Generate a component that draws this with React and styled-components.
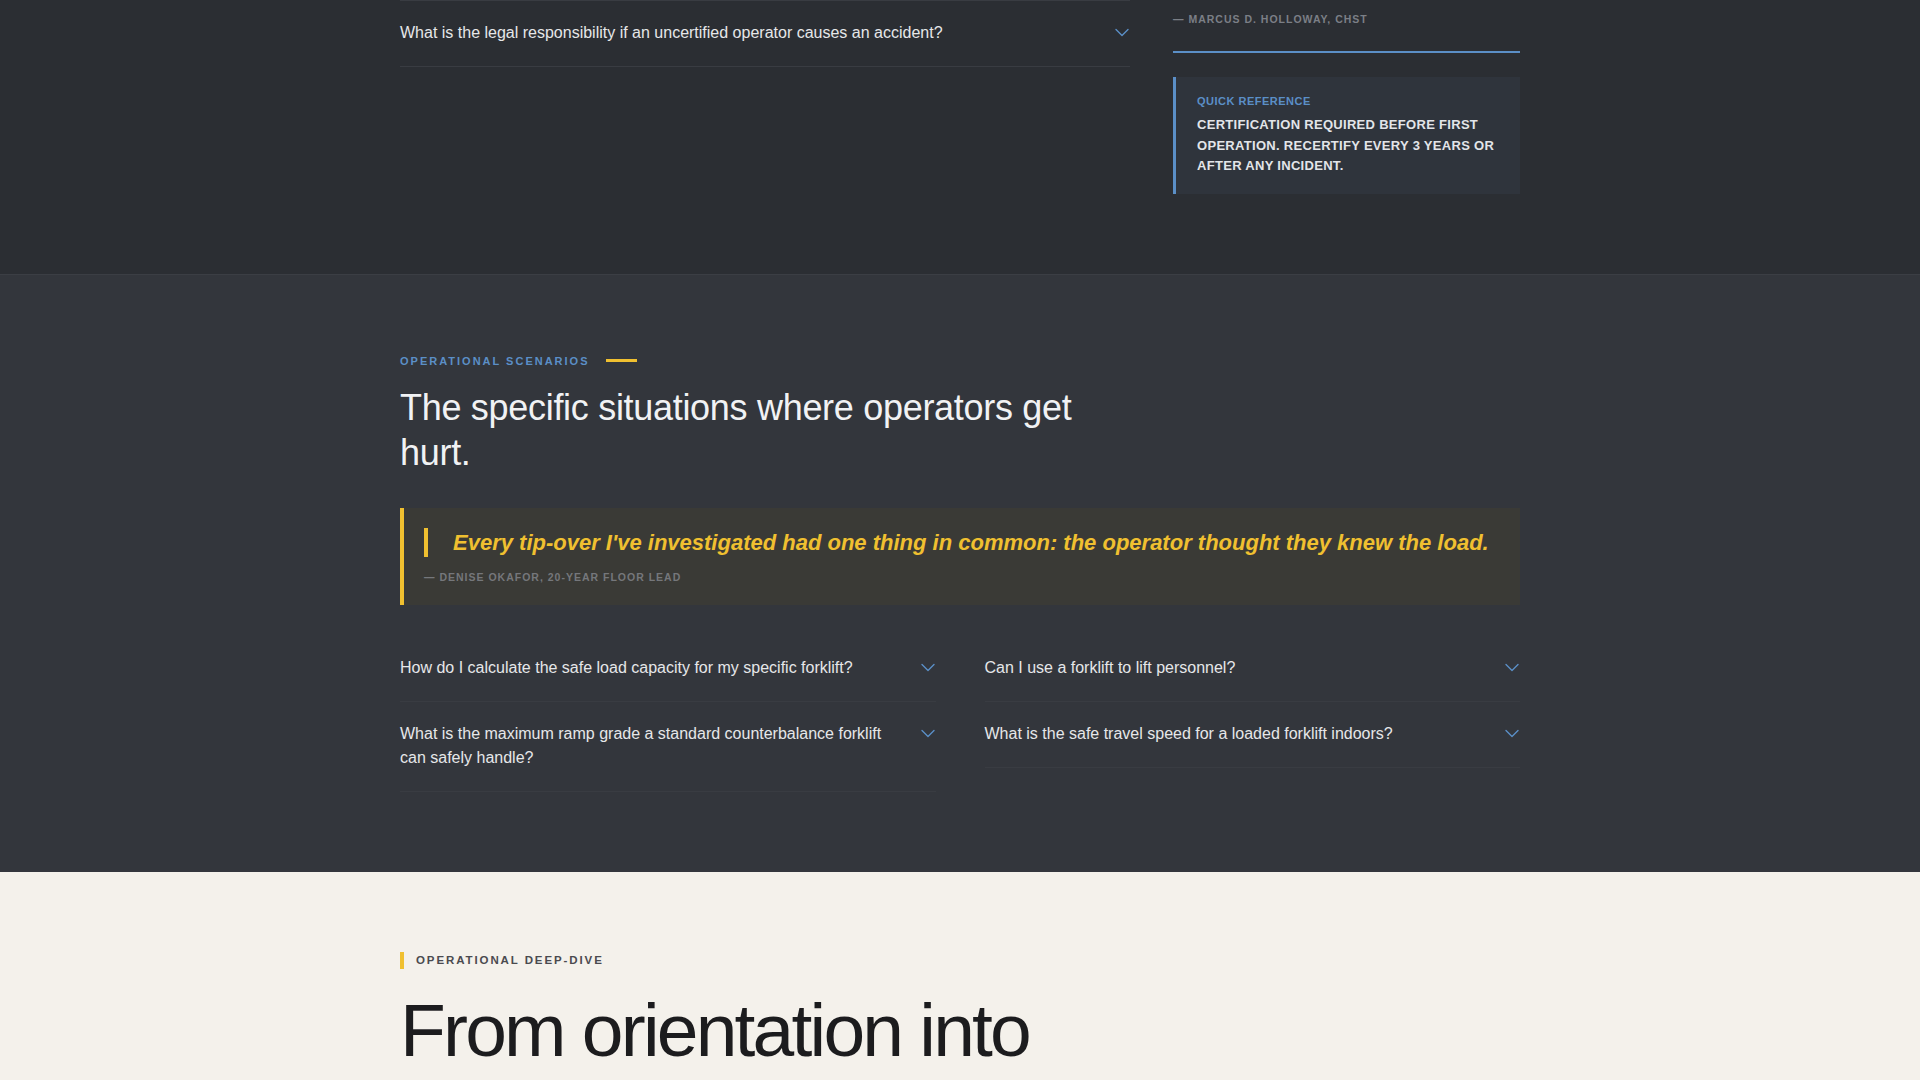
import React from 'react';
import styled, { createGlobalStyle } from 'styled-components';

const GlobalStyle = createGlobalStyle`
  * {
    box-sizing: border-box;
  }
  body {
    margin: 0;
    background: #2b2e33;
    font-family: 'Liberation Sans', Arial, Helvetica, sans-serif;
    -webkit-font-smoothing: antialiased;
  }
`;

const Section = styled.section`
  background: ${(props) => props.$bg};
  border-top: ${(props) => (props.$divided ? '1px solid #3b3e44' : 'none')};
  padding: ${(props) => props.$pad || '80px 0'};
`;

const Container = styled.div`
  width: 1120px;
  margin: 0 auto;
`;

const SplitGrid = styled.div`
  display: grid;
  grid-template-columns: 1fr 347px;
  column-gap: 43px;
  align-items: start;
`;

const FaqList = styled.div`
  display: flex;
  flex-direction: column;
`;

const FaqGrid = styled.div`
  display: grid;
  grid-template-columns: 1fr 1fr;
  column-gap: 49px;
  align-items: start;
  margin-top: 31px;
`;

const FaqColumn = styled.div`
  display: flex;
  flex-direction: column;
`;

const FaqItem = styled.div`
  display: flex;
  align-items: flex-start;
  justify-content: space-between;
  gap: 24px;
  padding: 20px 0 21px;
  border-top: ${(props) => (props.$first ? '1px solid #393c42' : 'none')};
  border-bottom: 1px solid #393c42;
  cursor: pointer;
`;

const FaqQuestion = styled.span`
  font-size: 16px;
  line-height: 24px;
  color: #e6e7e9;
`;

const Chevron = styled.svg`
  flex-shrink: 0;
  width: 16px;
  height: 16px;
  margin-top: 3px;
  color: #5b8fc7;
`;

const Attribution = styled.div`
  font-size: 10.5px;
  font-weight: 700;
  letter-spacing: 1px;
  text-transform: uppercase;
  color: ${(props) => props.$color || '#7b7f86'};
  line-height: 16px;
`;

const Testimonial = styled.div`
  padding: 11px 0 24px;
  border-bottom: 2px solid #5b8fc7;
`;

const QuickRef = styled.aside`
  margin-top: 24px;
  background: #2f343c;
  border-left: 3px solid #5b8fc7;
  padding: 18px 20px 17px 21px;
`;

const QuickRefLabel = styled.div`
  font-size: 11px;
  font-weight: 700;
  letter-spacing: 0.5px;
  color: #5b8fc7;
  text-transform: uppercase;
  margin-bottom: 8px;
`;

const QuickRefBody = styled.p`
  margin: 0;
  font-size: 13px;
  line-height: 20.5px;
  font-weight: 700;
  letter-spacing: 0.3px;
  color: #e3e5e9;
  text-transform: uppercase;
`;

const EyebrowRow = styled.div`
  display: flex;
  align-items: center;
  gap: 16px;
`;

const Eyebrow = styled.span`
  font-size: 11px;
  font-weight: 700;
  letter-spacing: 2px;
  text-transform: uppercase;
  color: #5b8fc7;
`;

const Dash = styled.span`
  display: block;
  width: 31px;
  height: 3px;
  background: #f0c030;
`;

const SectionTitle = styled.h2`
  margin: 18px 0 0;
  max-width: 720px;
  font-size: 36px;
  line-height: 45px;
  font-weight: 400;
  color: #f1f2f4;
  letter-spacing: -0.3px;
`;

const PullQuote = styled.blockquote`
  margin: 33px 0 0;
  background: #3a3a36;
  border-left: 4px solid #f0c030;
  padding: 20px 24px 20px 20px;
`;

const QuoteText = styled.p`
  margin: 0 0 12px;
  border-left: 4px solid #f0c030;
  padding-left: 25px;
  font-size: 22px;
  line-height: 29px;
  font-weight: 700;
  font-style: italic;
  color: #f0c030;
`;

const Kicker = styled.div`
  display: flex;
  align-items: center;
  gap: 12px;
  font-size: 11.5px;
  font-weight: 700;
  letter-spacing: 1.9px;
  text-transform: uppercase;
  color: #4a4a4f;

  &::before {
    content: '';
    display: block;
    width: 4px;
    height: 17px;
    background: #f0c030;
  }
`;

const DisplayTitle = styled.h2`
  margin: 20px 0 0;
  font-size: 75px;
  line-height: 1.1;
  font-weight: 400;
  letter-spacing: -2.8px;
  color: #1c1c1e;
`;

const ChevronDown = () => (
  <Chevron viewBox="0 0 16 16" fill="none">
    <path
      d="M2 5.5L8 11.5L14 5.5"
      stroke="currentColor"
      strokeWidth="1.4"
      strokeLinecap="round"
      strokeLinejoin="round"
    />
  </Chevron>
);

const Faq = ({ question, first }) => (
  <FaqItem $first={first}>
    <FaqQuestion>{question}</FaqQuestion>
    <ChevronDown />
  </FaqItem>
);

const scenarioColumns = [
  [
    'How do I calculate the safe load capacity for my specific forklift?',
    'What is the maximum ramp grade a standard counterbalance forklift can safely handle?',
  ],
  [
    'Can I use a forklift to lift personnel?',
    'What is the safe travel speed for a loaded forklift indoors?',
  ],
];

const App = () => {
  return (
    <>
      <GlobalStyle />
      <Section $bg="#2b2e33" $pad="0 0 80px">
        <Container>
          <SplitGrid>
            <FaqList>
              <Faq
                first
                question="What is the legal responsibility if an uncertified operator causes an accident?"
              />
            </FaqList>
            <div>
              <Testimonial>
                <Attribution>— Marcus D. Holloway, CHST</Attribution>
              </Testimonial>
              <QuickRef>
                <QuickRefLabel>Quick Reference</QuickRefLabel>
                <QuickRefBody>
                  Certification required before first operation. Recertify every 3
                  years or after any incident.
                </QuickRefBody>
              </QuickRef>
            </div>
          </SplitGrid>
        </Container>
      </Section>

      <Section $bg="#33363c" $divided>
        <Container>
          <EyebrowRow>
            <Eyebrow>Operational Scenarios</Eyebrow>
            <Dash />
          </EyebrowRow>
          <SectionTitle>The specific situations where operators get hurt.</SectionTitle>
          <PullQuote>
            <QuoteText>
              Every tip-over I've investigated had one thing in common: the operator
              thought they knew the load.
            </QuoteText>
            <Attribution $color="#75777b">— Denise Okafor, 20-Year Floor Lead</Attribution>
          </PullQuote>
          <FaqGrid>
            {scenarioColumns.map((column, i) => (
              <FaqColumn key={i}>
                {column.map((q) => (
                  <Faq key={q} question={q} />
                ))}
              </FaqColumn>
            ))}
          </FaqGrid>
        </Container>
      </Section>

      <Section $bg="#f4f1eb">
        <Container>
          <Kicker>Operational Deep-Dive</Kicker>
          <DisplayTitle>From orientation into</DisplayTitle>
        </Container>
      </Section>
    </>
  );
};

export default App;
